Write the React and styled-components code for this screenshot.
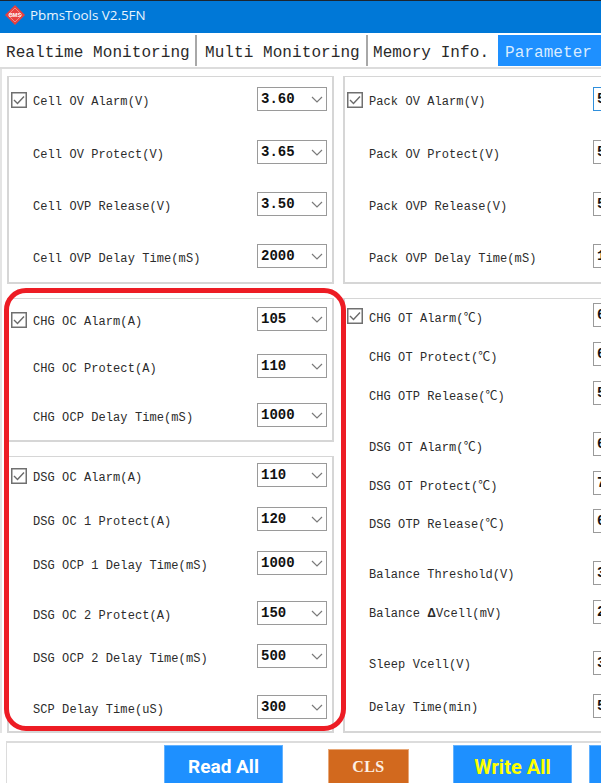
import React from 'react'
import styled, { createGlobalStyle } from 'styled-components'

const GlobalStyle = createGlobalStyle`
    html, body {
        margin: 0;
        padding: 0;
        background: #fff;
    }
`

const Page = styled.div`
    position: relative;
    display: flex;
    flex-direction: column;
    width: 601px;
    height: 783px;
    overflow: hidden;
    background: #fff;
`

const TitleBar = styled.div`
    display: flex;
    align-items: center;
    gap: 5px;
    box-sizing: border-box;
    height: 33px;
    padding: 0 0 4px 5px;
    flex-shrink: 0;
    border-top: 1px solid #1c2530;
    background: #0078d7;
    color: #eaf5fd;
    font-family: "Open Sans", sans-serif;
    font-size: 13.4px;
`

const TabStrip = styled.div`
    display: flex;
    align-items: stretch;
    box-sizing: border-box;
    height: 36px;
    padding-top: 2px;
    flex-shrink: 0;
    border-bottom: 2px solid #dcdcdc;
`

const Tab = styled.div`
    display: flex;
    align-items: center;
    box-sizing: border-box;
    width: ${props => props.$width}px;
    padding: 4px 0 0 ${props => props.$pad}px;
    margin-bottom: 1px;
    font-family: "Liberation Mono", monospace;
    font-size: 16px;
    letter-spacing: 0.07px;
    white-space: nowrap;
    color: ${props => props.$active ? '#d9ecff' : '#2a2a2a'};
    background: ${props => props.$active ? '#1e90ff' : '#fff'};
    border-right: ${props => props.$divider ? '2px solid #a8a8a8' : 'none'};
`

const Content = styled.div`
    display: flex;
    gap: 9px;
    width: 670px;
    box-sizing: border-box;
    padding: 7px 0 0 5px;
    flex-shrink: 0;
    border-left: 2px solid #e4e4e4;
`

const Column = styled.div`
    display: flex;
    flex-direction: column;
    gap: 14px;
    width: 327px;
    flex-shrink: 0;
`

const Panel = styled.div`
    box-sizing: border-box;
    height: ${props => props.$height}px;
    border: 2px solid #d6d6d6;
    border-top-width: 1.5px;
    background: #fff;
`

const Row = styled.div`
    display: flex;
    align-items: center;
    height: 24px;
    margin-top: ${props => props.$gap}px;
`

const CheckSlot = styled.div`
    display: flex;
    align-items: center;
    width: 24px;
    padding: 2px 0 0 2px;
    box-sizing: border-box;
    flex-shrink: 0;
`

const Label = styled.div`
    width: 224px;
    padding-top: ${props => props.$drop}px;
    flex-shrink: 0;
    font-family: "Liberation Mono", "Noto Sans CJK SC", monospace;
    font-size: 12px;
    letter-spacing: 0.08px;
    white-space: pre;
    color: #2b2b2b;
`

const Delta = styled.span`
    font-family: "Liberation Sans", sans-serif;
    font-weight: 700;
`

const Combo = styled.div`
    position: relative;
    display: flex;
    align-items: center;
    box-sizing: border-box;
    width: 70px;
    height: 24px;
    padding: 0 0 1px 3px;
    flex-shrink: 0;
    border: 1.5px solid ${props => props.$focused ? '#2f8fdc' : '#9a9a9a'};
    background: #fff;
    font-family: "Liberation Mono", monospace;
    font-size: 14px;
    font-weight: 700;
    color: #111;
`

const Chevron = styled.svg`
    position: absolute;
    right: 3px;
    top: 8px;
`

const Highlight = styled.div`
    position: absolute;
    left: 4px;
    top: 288px;
    width: 342px;
    height: 443px;
    box-sizing: border-box;
    border: 5px solid #ed1c24;
    border-radius: 22px;
    pointer-events: none;
`

const ActionBar = styled.div`
    display: flex;
    align-items: flex-start;
    box-sizing: border-box;
    height: 60px;
    margin: 8px 0 0 6px;
    padding-top: 2px;
    flex-shrink: 0;
    border-top: 2px solid #dcdcdc;
    border-left: 1.5px solid #dcdcdc;
`

const ActionButton = styled.div`
    display: flex;
    justify-content: center;
    box-sizing: border-box;
    width: ${props => props.$width}px;
    height: 44px;
    margin-left: ${props => props.$left}px;
    padding-top: 9px;
    flex-shrink: 0;
    border: 1px solid #63b2ff;
    background: #1e90ff;
    color: ${props => props.$color};
    font-family: Roboto, sans-serif;
    font-size: ${props => props.$size || 19}px;
    font-weight: 700;
`

const ClearButton = styled(ActionButton)`
    margin-top: 4px;
    padding-top: 8px;
    border-color: #e8a878;
    background: #d2691e;
    font-family: "Liberation Serif", serif;
    font-size: 16px;
    letter-spacing: 0.4px;
`

const leftPanels = [
    {
        height: 208,
        rows: [
            { label: 'Cell OV Alarm(V)', value: '3.60', check: true, gap: 10 },
            { label: 'Cell OV Protect(V)', value: '3.65', gap: 29 },
            { label: 'Cell OVP Release(V)', value: '3.50', gap: 28 },
            { label: 'Cell OVP Delay Time(mS)', value: '2000', gap: 28 },
        ],
    },
    {
        height: 144,
        rows: [
            { label: 'CHG OC Alarm(A)', value: '105', check: true, gap: 8 },
            { label: 'CHG OC Protect(A)', value: '110', gap: 23 },
            { label: 'CHG OCP Delay Time(mS)', value: '1000', gap: 25 },
        ],
    },
    {
        height: 277,
        rows: [
            { label: 'DSG OC Alarm(A)', value: '110', check: true, gap: 6 },
            { label: 'DSG OC 1 Protect(A)', value: '120', gap: 20 },
            { label: 'DSG OCP 1 Delay Time(mS)', value: '1000', gap: 20 },
            { label: 'DSG OC 2 Protect(A)', value: '150', gap: 26 },
            { label: 'DSG OCP 2 Delay Time(mS)', value: '500', gap: 19 },
            { label: 'SCP Delay Time(uS)', value: '300', gap: 27 },
        ],
    },
]

const rightPanels = [
    {
        height: 208,
        rows: [
            { label: 'Pack OV Alarm(V)', value: '5', check: true, focused: true, gap: 10 },
            { label: 'Pack OV Protect(V)', value: '5', gap: 29 },
            { label: 'Pack OVP Release(V)', value: '5', gap: 28 },
            { label: 'Pack OVP Delay Time(mS)', value: '1', gap: 28 },
        ],
    },
    {
        height: 435,
        drop: 3,
        rows: [
            { label: 'CHG OT Alarm(℃)', value: '6', check: true, gap: 4 },
            { label: 'CHG OT Protect(℃)', value: '6', gap: 15 },
            { label: 'CHG OTP Release(℃)', value: '5', gap: 15 },
            { label: 'DSG OT Alarm(℃)', value: '6', gap: 27 },
            { label: 'DSG OT Protect(℃)', value: '7', gap: 15 },
            { label: 'DSG OTP Release(℃)', value: '6', gap: 14 },
            { label: 'Balance Threshold(V)', value: '3', gap: 28 },
            { label: <>Balance <Delta>Δ</Delta>Vcell(mV)</>, key: 'delta', value: '2', gap: 15 },
            { label: 'Sleep Vcell(V)', value: '3', gap: 27 },
            { label: 'Delay Time(min)', value: '5', gap: 19 },
        ],
    },
]

function Logo(){
    return (
        <svg width="20" height="20" viewBox="0 0 20 20">
            <polygon points="10,0 20,10 10,20 0,10" fill="#e8403f"/>
            <polygon points="10,3 17,10 10,17 3,10" fill="none" stroke="#f7b9b4" strokeWidth="0.6"/>
            <text x="10" y="12" fontSize="5.5" fontWeight="700" fontFamily="Liberation Sans" fill="#fff" textAnchor="middle">BMS</text>
        </svg>
    )
}

function CheckBox(){
    return (
        <svg width="16" height="16" viewBox="0 0 16 16">
            <rect x="0.75" y="0.75" width="14.5" height="14.5" fill="#fff" stroke="#707070" strokeWidth="1.5"/>
            <polyline points="3,8 6.5,11.5 13,4.5" fill="none" stroke="#6a6a6a" strokeWidth="1.4"/>
        </svg>
    )
}

function ParamRow({ row, drop }){
    return (
        <Row $gap={row.gap}>
            <CheckSlot>{row.check && <CheckBox/>}</CheckSlot>
            <Label $drop={drop}>{row.label}</Label>
            <Combo $focused={row.focused}>
                {row.value}
                <Chevron width="12" height="7" viewBox="0 0 12 7">
                    <polyline points="1,1 6,6 11,1" fill="none" stroke="#7a7a7a" strokeWidth="1.2"/>
                </Chevron>
            </Combo>
        </Row>
    )
}

function ParamColumn({ panels }){
    return (
        <Column>
            {panels.map(panel => (
                <Panel key={panel.height} $height={panel.height}>
                    {panel.rows.map(row => <ParamRow key={row.key || row.label} row={row} drop={panel.drop ?? 5}/>)}
                </Panel>
            ))}
        </Column>
    )
}

export default function App(){
    return (
        <Page>
            <GlobalStyle/>
            <TitleBar>
                <Logo/>
                PbmsTools V2.5FN
            </TitleBar>
            <TabStrip>
                <Tab $width={197} $pad={6} $divider>Realtime Monitoring</Tab>
                <Tab $width={171} $pad={8} $divider>Multi Monitoring</Tab>
                <Tab $width={130} $pad={5}>Memory Info.</Tab>
                <Tab $width={103} $pad={7} $active>Parameter</Tab>
            </TabStrip>
            <Content>
                <ParamColumn panels={leftPanels}/>
                <ParamColumn panels={rightPanels}/>
            </Content>
            <ActionBar>
                <ActionButton $width={119} $left={157} $color="#fff">Read All</ActionButton>
                <ClearButton $width={81} $left={45} $color="#fdf0e4">CLS</ClearButton>
                <ActionButton $width={119} $left={44} $size={20} $color="#ffff00">Write All</ActionButton>
                <ActionButton $width={60} $left={17} $color="#fff"></ActionButton>
            </ActionBar>
            <Highlight/>
        </Page>
    )
}
